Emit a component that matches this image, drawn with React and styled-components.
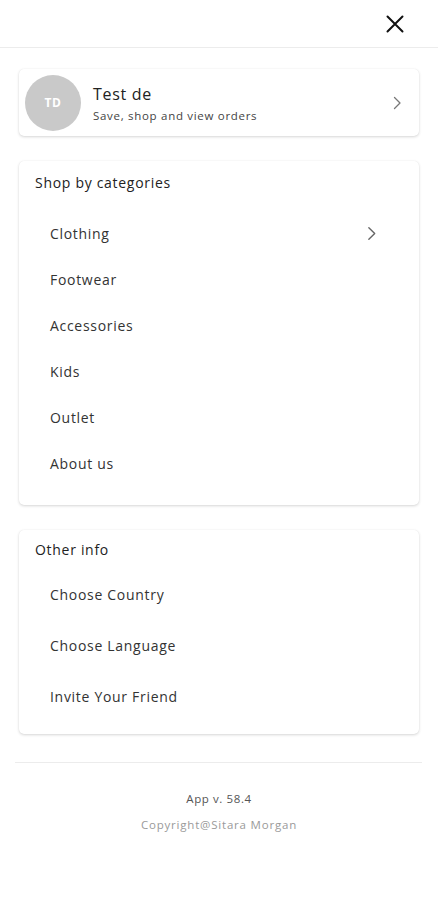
import styled, { createGlobalStyle } from 'styled-components'

const GlobalStyle = createGlobalStyle`
  body {
    margin: 0;
    background: #fff;
    font-family: 'Open Sans', 'Liberation Sans', sans-serif;
    color: #222;
  }
`

const Page = styled.div`
  width: 438px;
  min-height: 900px;
  background: #fff;
`

const Header = styled.header`
  height: 48px;
  display: flex;
  align-items: center;
  justify-content: flex-end;
  padding-right: 34px;
  border-bottom: 1px solid #ececec;
  box-sizing: border-box;
`

const CloseButton = styled.button`
  border: none;
  background: none;
  padding: 0;
  display: flex;
  cursor: pointer;
`

const Body = styled.div`
  padding: 21px 19px 0;
  display: flex;
  flex-direction: column;
  gap: 25px;
`

const Card = styled.div`
  background: #fff;
  border-radius: 5px;
  box-shadow: 0 1px 3px rgba(0, 0, 0, 0.16), 0 0 1px rgba(0, 0, 0, 0.08);
`

const ProfileCard = styled(Card)`
  height: 67px;
  display: flex;
  align-items: center;
  padding: 0 14px 0 6px;
  gap: 12px;
`

const Avatar = styled.div`
  width: 56px;
  height: 56px;
  border-radius: 50%;
  background: #c9c9c9;
  color: #fff;
  font-weight: 700;
  font-size: 12px;
  display: flex;
  align-items: center;
  justify-content: center;
  letter-spacing: 0.5px;
`

const ProfileText = styled.div`
  flex: 1;
  display: flex;
  flex-direction: column;
  gap: 3px;
`

const Name = styled.div`
  font-size: 16px;
  letter-spacing: 0.7px;
  color: #222;
`

const Sub = styled.div`
  font-size: 11.5px;
  letter-spacing: 0.7px;
  color: #444;
`

const Section = styled(Card)`
  padding: ${({ pad }) => pad};
`

const SectionTitle = styled.div`
  font-size: 14px;
  letter-spacing: 0.7px;
  color: #222;
  padding-left: 16px;
  margin-bottom: ${({ gap }) => gap}px;
`

const Item = styled.div`
  height: ${({ h }) => h}px;
  display: flex;
  align-items: center;
  justify-content: space-between;
  padding: 0 39px 0 31px;
  font-size: 14px;
  letter-spacing: 0.7px;
  color: #333;
`

const Divider = styled.hr`
  margin: 28px 16px 0 15px;
  border: none;
  border-top: 1px solid #ececec;
`

const Footer = styled.div`
  display: flex;
  flex-direction: column;
  align-items: center;
  padding-top: 28px;
  gap: 11px;
`

const Version = styled.div`
  font-size: 11.5px;
  letter-spacing: 0.6px;
  color: #555;
`

const Copyright = styled.div`
  font-size: 11.5px;
  letter-spacing: 0.8px;
  color: #9a9a9a;
`

const Chevron = ({ size = 16, color = '#777' }) => (
  <svg width={size} height={size} viewBox="0 0 16 16" fill="none">
    <path d="M5.5 2.5 L11 8 L5.5 13.5" stroke={color} strokeWidth="1.3" strokeLinecap="round" strokeLinejoin="round" />
  </svg>
)

const categories = ['Clothing', 'Footwear', 'Accessories', 'Kids', 'Outlet', 'About us']
const other = ['Choose Country', 'Choose Language', 'Invite Your Friend']

const App = () => (
  <Page>
    <GlobalStyle />
    <Header>
      <CloseButton>
        <svg width="18" height="18" viewBox="0 0 18 18">
          <path d="M1.5 1.5 L16.5 16.5 M16.5 1.5 L1.5 16.5" stroke="#111" strokeWidth="2" strokeLinecap="round" />
        </svg>
      </CloseButton>
    </Header>

    <Body>
      <ProfileCard>
        <Avatar>TD</Avatar>
        <ProfileText>
          <Name>Test de</Name>
          <Sub>Save, shop and view orders</Sub>
        </ProfileText>
        <Chevron />
      </ProfileCard>

      <Section pad="12px 0 19px">
        <SectionTitle gap={18}>Shop by categories</SectionTitle>
        {categories.map((c, i) => (
          <Item key={c} h={46}>
            {c}
            {i === 0 && <Chevron size={17} color="#666" />}
          </Item>
        ))}
      </Section>

      <Section pad="10px 0 12px">
        <SectionTitle gap={10}>Other info</SectionTitle>
        {other.map(o => (
          <Item key={o} h={51}>
            {o}
          </Item>
        ))}
      </Section>
    </Body>

    <Divider />

    <Footer>
      <Version>App v. 58.4</Version>
      <Copyright>Copyright@Sitara Morgan</Copyright>
    </Footer>
  </Page>
)

export default App
